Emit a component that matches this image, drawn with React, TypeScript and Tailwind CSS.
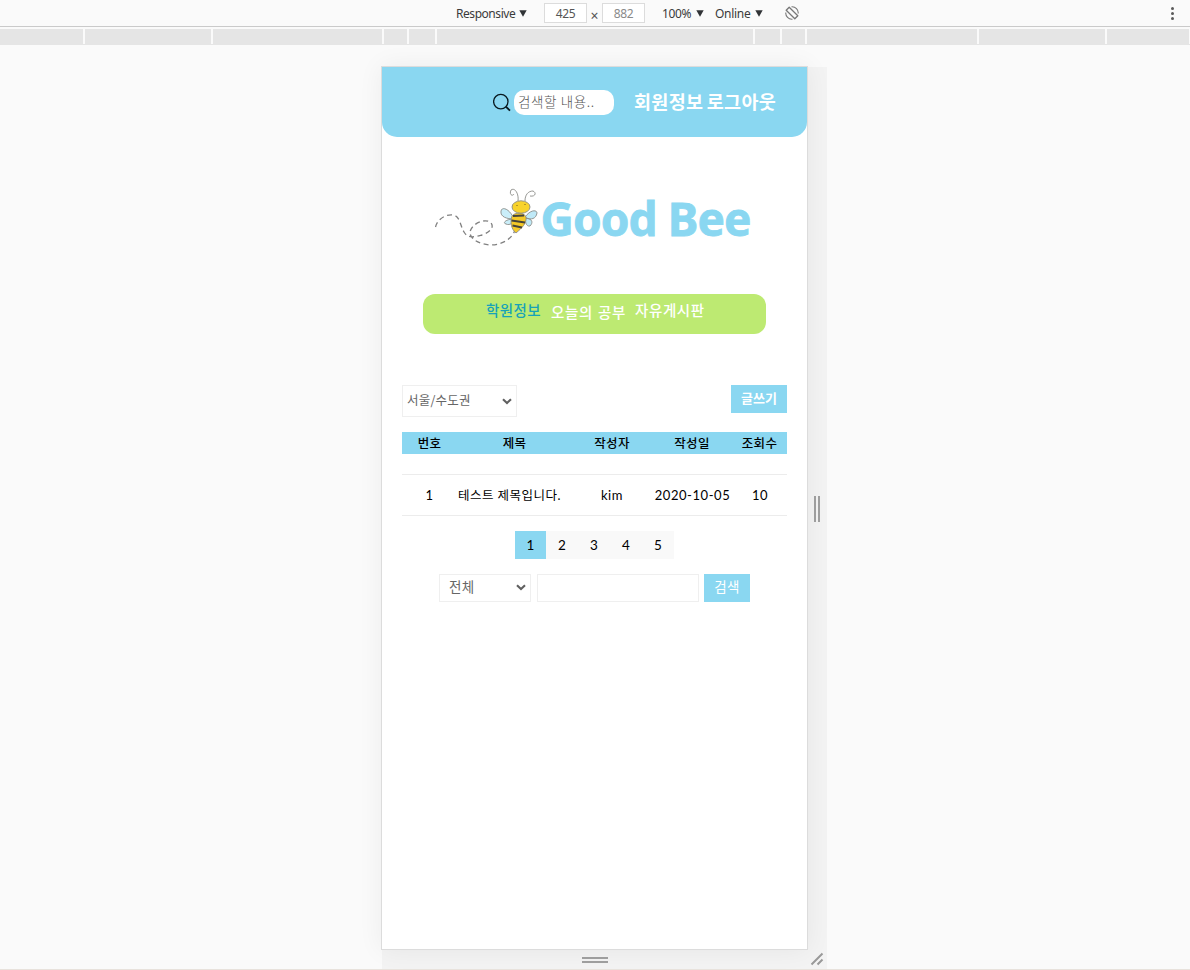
import React from 'react';

function Caret() {
  return (
    <svg className="mb-[2px] h-[7px] w-[8px]" viewBox="0 0 8 7"><path d="M0.3 0.3H7.7L4 6.8Z" fill="#303336" /></svg>
  );
}

function Chevron() {
  return (
    <svg className="mt-[2px] h-[7px] w-[10px] shrink-0" viewBox="0 0 10 7" fill="none">
      <path d="M1 1.2L5 5L9 1.2" stroke="#606060" strokeWidth="2.1" />
    </svg>
  );
}

function Toolbar() {
  return (
    <div className="flex h-[27px] shrink-0 border-b border-[#cacaca] pt-[2px] font-['Noto_Sans','Open_Sans',sans-serif] text-[12px] leading-[22px] text-[#3a3a3a]">
      <div className="ml-[456px] flex w-[88px] items-center gap-[5px]">
        <span className="w-[58px] whitespace-nowrap tracking-[-0.45px]">Responsive</span>
        <Caret />
      </div>
      <div className="mt-px flex h-[20px] w-[43px] items-center justify-center border border-[#dcdcdc] bg-white pt-px text-[#555] tracking-[-0.3px]">425</div>
      <div className="w-[15px] pt-[3px] text-center text-[14px] leading-[21px] text-[#555]">×</div>
      <div className="mt-px flex h-[20px] w-[43px] items-center justify-center border border-[#dcdcdc] bg-white pt-px text-[#8a8a8a] tracking-[-0.3px]">882</div>
      <div className="ml-[17px] flex w-[53px] items-center">
        <span className="w-[34px] whitespace-nowrap tracking-[-0.4px]">100%</span>
        <Caret />
      </div>
      <div className="flex w-[70px] items-center">
        <span className="w-[40px] whitespace-nowrap tracking-[-0.3px]">Online</span>
        <Caret />
      </div>
      <svg className="mt-[4px] h-[14px] w-[14px]" viewBox="0 0 14 14" fill="none" stroke="#777">
        <path d="M4.2 1.2L12.8 9.8L9.8 12.8L1.2 4.2Z" strokeWidth="1.3" strokeLinejoin="round" />
        <path d="M6.5 0.8C10.4 0.4 13.6 3.6 13.2 7.5M7.5 13.2C3.6 13.6 0.4 10.4 0.8 6.5" strokeWidth="1.1" />
      </svg>
      <svg className="ml-auto mr-[15px] mt-[4px] h-[15px] w-[5px]" viewBox="0 0 5 15" fill="#5a5a5a">
        <circle cx="2.5" cy="2.5" r="1.5" /><circle cx="2.5" cy="7.5" r="1.5" /><circle cx="2.5" cy="12.5" r="1.5" />
      </svg>
    </div>
  );
}

function Ruler() {
  return (
    <div className="mt-[2px] h-[16px] shrink-0 border-b border-[#e5e5e5]">
      <div className="grid h-[15px] grid-cols-[83px_126px_169px_23px_26px_316px_25px_23px_170px_126px_82px] gap-[2px]">
        {Array.from({ length: 11 }, (_, i) => <div key={i} className="bg-[#e5e5e5]" />)}
      </div>
    </div>
  );
}

function SiteHeader() {
  return (
    <header className="flex h-[70px] items-start rounded-b-[15px] bg-[#8ad7f1]">
      <svg className="ml-[111px] mt-[26px] h-[19px] w-[19px]" viewBox="0 0 19 19" fill="none" stroke="#08191f">
        <circle cx="7.8" cy="8.6" r="7.2" strokeWidth="1.3" />
        <path d="M12.8 13.6L17 17.6" strokeWidth="1.9" />
      </svg>
      <div className="ml-[2px] mt-[23px] h-[25px] w-[100px] rounded-[10px] bg-white pl-[4px] text-[13.5px] leading-[23px] font-light tracking-[0.6px] whitespace-nowrap text-[#555]">검색할 내용..</div>
      <div className="ml-[20px] mt-[21px] whitespace-nowrap text-[18.5px] leading-[27px] font-bold tracking-[0.3px] [word-spacing:-1px] text-white">회원정보 로그아웃</div>
    </header>
  );
}

function Logo() {
  return (
    <svg className="ml-[50px] mt-[43px] block h-[80px] w-[330px]" viewBox="0 0 330 80">
      <g fill="none" stroke="#808080" strokeWidth="1.3" strokeDasharray="5 3.5">
        <path d="M3.5 47C5 40 13 34 21 35C28 36 28 45 32 52C36 59 42 57 50 55C59 52 63 46 58 42C51 38 39 45 38 52C38 60 48 64 58 65C70 65 80 59 83 50" />
      </g>
      <g stroke="#8b8c88" strokeWidth="0.9">
        <path d="M86 21C87 14 83 7 79 10C77 14 80 17 82 14" fill="none" />
        <path d="M93 21C93 15 96 11 101 11C105 13 103 17 98 16" fill="none" />
        <path d="M82 39C78 29 70 26 69 31C68 37 75 39 82 39C74 39 70 43 74 44C78 46 82 42 83 39Z" fill="#caeef9" />
        <path d="M93 37C99 29 105 30 105 33C104 39 99 40 94 38C101 39 101 43 98 46C94 47 93 41 93 37Z" fill="#bfe9f7" />
        <path d="M80 36C83 32 92 32 94 37C95 43 90 48 84 53C79 49 78 42 80 36Z" fill="#f4c927" />
        <ellipse cx="89" cy="27" rx="9" ry="6.2" fill="#f8d32c" />
      </g>
      <path d="M81 36L92 35.5M79.5 40.5L93 42.5M80.5 45.5L90 47.5" stroke="#45443a" strokeWidth="2" />
      <path d="M85 25V26M93 24V25" stroke="#765b1c" strokeWidth="1" fill="none" />
      <text x="108.5" y="55.5" textLength="211" lengthAdjust="spacing" className="fill-[#8ad7f1] stroke-[#8ad7f1] stroke-[0.8px] font-['Noto_Sans'] text-[46px] font-bold">Good Bee</text>
    </svg>
  );
}

function Board() {
  const cols = 'grid grid-cols-[55px_115px_80px_80px_55px] text-center whitespace-nowrap';
  return (
    <section className="mx-[20px] mt-[51px] text-[12px] text-black">
      <div className="flex h-[47px] items-start justify-between">
        <div className="flex h-[32px] w-[115px] items-center justify-between border border-[#efefef] pr-[4px] pb-[2px] pl-[4px] text-[12.5px] text-[#666]">
          <span className="tracking-[0.2px]">서울/수도권</span><Chevron />
        </div>
        <div className="h-[28px] w-[56px] bg-[#8ad7f1] text-center text-[13px] leading-[26px] font-bold text-white">글쓰기</div>
      </div>
      <div className={cols + ' h-[22px] bg-[#8ad7f1] text-[12.5px] leading-[21px] font-medium tracking-[0.3px]'}>
        <span>번호</span><span>제목</span><span>작성자</span><span>작성일</span><span>조회수</span>
      </div>
      <div className={cols + " mt-[20px] h-[42px] border-y border-[#ececec] font-['Lato','Noto_Sans_CJK_KR',sans-serif] text-[13px] leading-[40px] tracking-[0.55px]"}>
        <span>1</span><span className="pr-[10px] text-[12.5px] leading-[41px] tracking-[0.5px]">테스트 제목입니다.</span><span>kim</span><span className="pl-px">2020-10-05</span><span className="pl-px">10</span>
      </div>
      <div className="mx-auto mt-[15px] grid h-[28px] w-[159px] grid-cols-[31px_32px_32px_32px_32px] bg-[#f9f9f9] text-center font-['Lato',sans-serif] text-[13.5px] leading-[28px]">
        <span className="bg-[#8ad7f1]">1</span><span>2</span><span>3</span><span>4</span><span>5</span>
      </div>
      <div className="mt-[15px] ml-[37px] flex h-[28px] text-[13.5px]">
        <div className="flex w-[92px] items-center justify-between border border-[#efefef] pr-[4px] pb-[3px] pl-[9px] text-[#666]"><span className="tracking-[0.4px]">전체</span><Chevron /></div>
        <div className="ml-[6px] w-[162px] border border-[#efefef]" />
        <div className="ml-[5px] w-[46px] bg-[#8ad7f1] text-center leading-[25px] tracking-[0.4px] text-white">검색</div>
      </div>
    </section>
  );
}

export default function App() {
  return (
    <div className="flex h-[970px] w-[1190px] flex-col overflow-hidden bg-[#fafafa] font-['Noto_Sans_CJK_KR',sans-serif]">
      <Toolbar />
      <Ruler />
      <div className="ml-[381px] mt-[21px] grid h-[903px] w-[446px] shrink-0 grid-cols-[427px_19px] grid-rows-[884px_19px]">
        <main className="z-10 border border-[#dcdcdc] bg-white shadow-[0_0_24px_rgba(0,0,0,0.06)]">
          <SiteHeader />
          <Logo />
          <nav className="mx-auto mt-[34px] flex h-[40px] w-[343px] rounded-[12px] bg-[#bdea72] pl-[63px] text-[14.5px] leading-[20px] font-medium whitespace-nowrap text-white">
            <span className="mt-[6px] w-[65px] tracking-[0.45px] text-[#17a2b8]">학원정보</span>
            <span className="mt-[8px] w-[84px] tracking-[0.7px] [word-spacing:1px]">오늘의 공부</span>
            <span className="mt-[6px] tracking-[0.6px]">자유게시판</span>
          </nav>
          <Board />
        </main>
        <div className="mt-px flex items-center justify-center gap-[2px] bg-[#f3f3f3] pr-[2px]">
          <div className="h-[26px] w-[2px] bg-[#a0a0a0]" /><div className="h-[26px] w-[2px] bg-[#a0a0a0]" />
        </div>
        <div className="ml-px flex flex-col items-center justify-center gap-[2px] bg-[#f3f3f3]">
          <div className="h-[2px] w-[26px] bg-[#a0a0a0]" /><div className="h-[2px] w-[26px] bg-[#a0a0a0]" />
        </div>
        <svg className="h-[19px] w-[19px] bg-[#f3f3f3]" viewBox="0 0 19 19" stroke="#999" strokeWidth="2" fill="none"><path d="M3.5 14.5L14.5 3.5M9.5 14.5L14.5 9.5" /></svg>
      </div>
      <div className="h-px shrink-0 bg-[#e8e2dc]" />
    </div>
  );
}
